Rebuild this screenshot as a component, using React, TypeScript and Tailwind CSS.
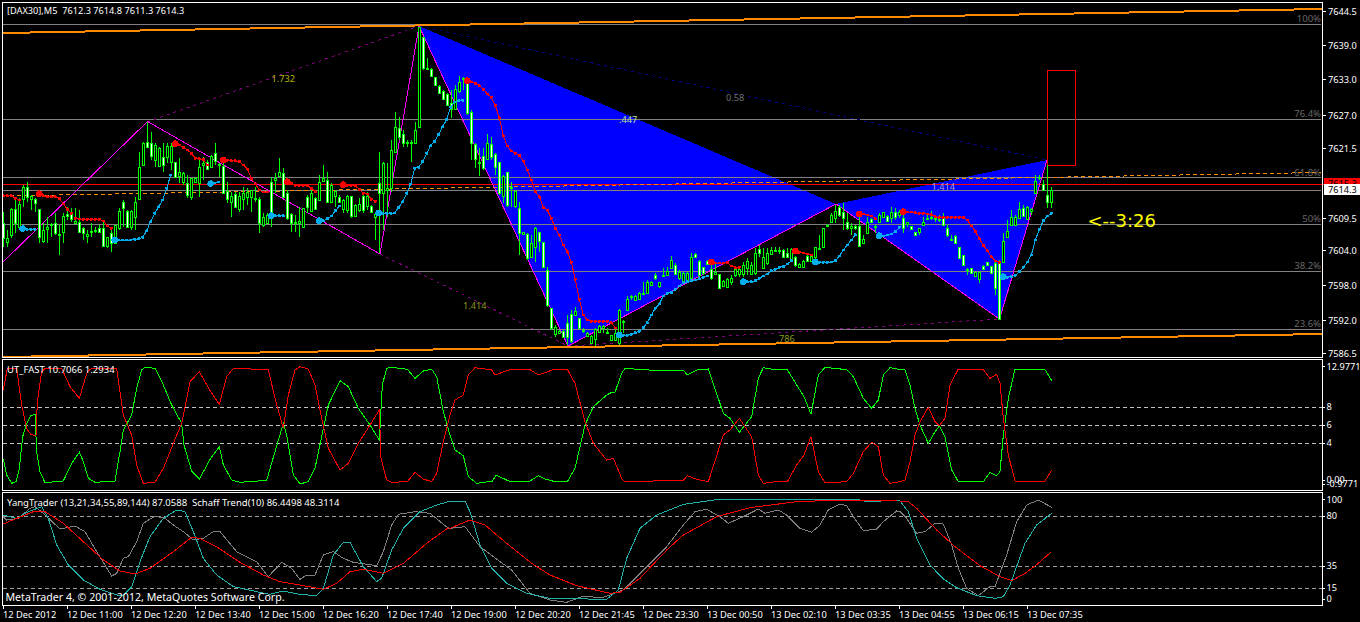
// MT4 chart: one flow column of panes, the chart drawings themselves are svg in page coordinates

type Candle = [number, number, number, number, number];

// high, low, body top, body bottom, white fill (all y in 3x px)
const candles: Candle[] = [
  [635,740,670,715,1],[690,740,715,725,0],[625,715,628,705,0],[590,700,627,668,1],[595,690,612,680,0],[555,620,562,598,0],[545,605,560,590,1],[585,630,588,596,0],[595,635,598,608,1],[628,730,628,712,1],
  [670,730,690,722,0],[650,730,682,686,0],[670,710,672,674,0],[640,705,668,700,1],[675,765,702,704,0],[640,730,648,695,0],[620,660,642,648,1],[625,665,642,658,1],[625,670,663,668,0],[630,700,665,695,1],
  [680,720,685,700,1],[690,730,702,708,0],[670,710,692,695,0],[680,700,690,692,0],[675,700,685,695,1],[660,740,685,738,1],[710,745,712,738,0],[690,755,700,730,1],[675,730,675,728,0],[625,690,633,685,0],
  [600,680,605,625,1],[630,685,634,680,1],[630,690,634,682,0],[590,690,605,650,0],[455,600,500,598,0],[425,497,430,495,0],[365,440,427,440,1],[395,480,430,467,1],[430,500,435,480,0],[440,500,445,498,0],
  [430,515,470,495,1],[430,490,438,470,0],[430,510,438,486,0],[485,535,486,530,1],[475,550,515,528,0],[515,555,518,545,0],[525,595,550,585,1],[535,600,535,590,0],[530,550,533,545,0],[475,590,500,548,0],
  [470,540,488,495,0],[480,510,485,508,1],[465,500,468,500,0],[430,495,458,482,1],[490,530,492,494,0],[490,575,498,578,1],[545,610,573,598,1],[575,650,588,605,0],[575,625,582,620,1],[575,635,588,628,0],
  [560,630,580,598,0],[565,615,575,590,0],[570,635,570,590,0],[560,605,595,598,0],[590,700,598,670,1],[640,680,650,675,0],[640,670,645,668,0],[530,680,545,645,1],[520,580,535,540,0],[475,530,515,527,0],
  [505,590,518,590,1],[570,660,578,655,1],[640,695,643,670,1],[645,695,665,668,0],[620,710,664,668,0],[625,685,625,680,0],[585,640,590,620,1],[570,635,580,632,0],[590,630,595,628,1],[525,600,545,600,0],
  [495,545,535,543,0],[515,610,540,607,1],[550,610,555,605,0],[570,620,572,588,0],[585,610,590,605,1],[598,640,600,628,0],[585,640,588,630,0],[587,655,588,648,1],[612,650,615,648,0],[595,635,612,630,0],
  [585,640,588,630,1],[575,630,588,618,0],[615,640,618,635,1],[640,720,643,650,0],[455,760,550,578,1],[485,690,488,580,0],[490,650,565,570,0],[420,575,450,565,0],[335,460,382,455,0],[350,420,385,410,1],
  [390,440,403,430,1],[420,440,425,428,0],[420,485,425,428,0],[365,430,390,428,0],[80,385,80,382,0],[110,210,112,205,1],[175,210,205,208,0],[205,230,208,228,1],[232,255,232,255,1],[255,280,258,278,1],
  [270,300,272,298,1],[280,315,282,315,1],[270,355,308,328,1],[255,330,268,328,0],[228,280,245,272,0],[230,270,235,238,0],[240,345,250,340,1],[330,480,335,430,1],[430,505,432,478,1],[445,528,485,488,0],
  [445,510,468,505,1],[403,480,428,478,0],[410,480,432,472,1],[460,525,462,500,1],[485,585,485,580,1],[525,610,527,588,0],[515,620,517,615,1],[545,620,560,565,0],[570,625,572,618,0],[605,765,625,700,1],
  [695,705,695,703,0],[700,780,702,775,1],[705,775,730,770,0],[680,785,683,740,0],[695,755,695,722,1],[727,800,727,800,1],[800,920,810,915,1],[925,990,925,985,1],[975,1010,980,1002,0],[990,1002,992,1000,0],
  [990,1015,992,1010,1],[945,1035,968,1010,1],[930,1030,942,1022,1],[920,945,932,945,0],[955,985,955,985,1],[985,1000,990,992,0],[995,1010,998,1008,0],[1005,1030,1007,1030,0],[985,1038,987,1018,0],[975,1000,978,995,0],
  [975,1000,978,985,0],[985,1000,995,998,0],[1005,1020,1005,1020,0],[980,1020,998,1020,0],[928,1035,930,1030,0],[960,1000,962,964,0],[888,930,898,930,0],[885,900,888,890,0],[885,900,888,900,0],[875,900,878,898,0],
  [845,880,878,880,0],[840,880,845,878,0],[842,858,845,856,0],[820,840,825,835,1],[845,865,845,858,0],[805,830,825,826,0],[800,825,812,824,0],[768,805,780,803,0],[790,825,795,822,1],[810,840,815,835,0],
  [815,850,818,845,0],[815,850,820,845,0],[760,835,770,835,0],[760,770,762,770,1],[780,830,782,825,1],[800,825,802,818,1],[780,795,782,792,1],[795,840,808,835,1],[790,825,815,822,0],[822,865,822,865,1],
  [840,860,843,858,0],[835,865,838,860,0],[825,855,835,845,0],[800,830,808,825,0],[800,830,808,822,0],[785,830,795,822,0],[775,825,782,805,0],[785,825,795,822,0],[745,825,760,820,0],[735,770,748,760,1],
  [745,805,770,805,0],[745,795,760,790,0],[740,765,750,762,0],[740,755,750,752,0],[740,762,750,752,0],[748,772,750,770,1],[745,775,760,770,1],[745,785,748,780,0],[768,800,770,795,1],[788,805,792,802,0],
  [780,805,782,802,0],[765,785,768,782,1],[765,785,768,782,0],[740,785,740,770,0],[705,750,745,747,0],[685,740,685,740,0],[672,678,675,677,0],[640,670,645,665,0],[615,670,632,655,0],[615,650,622,645,1],
  [610,690,635,655,1],[640,690,665,685,1],[670,705,678,685,0],[675,690,678,685,1],[640,740,678,738,1],[705,730,718,728,0],[650,700,665,698,0],[655,668,658,665,1],[675,700,677,678,0],[640,670,645,665,0],
  [635,655,635,650,0],[645,665,648,662,1],[622,670,635,655,0],[625,660,635,650,1],[630,655,635,645,0],[645,700,655,685,1],[665,680,665,672,0],[678,688,678,686,1],[695,708,697,706,1],[685,705,685,696,0],
  [650,678,665,675,0],[645,660,655,656,0],[632,660,650,652,0],[645,665,655,657,0],[645,665,658,660,0],[640,678,655,675,1],[675,710,685,706,1],[705,720,716,718,0],[705,728,708,728,1],[740,778,740,775,1],
  [765,796,765,796,1],[805,825,807,808,0],[803,818,805,818,1],[815,830,817,828,0],[815,848,817,838,0],[795,808,797,806,1],[785,798,785,796,1],[798,820,798,818,1],[785,885,788,865,1],[780,958,790,958,1],
  [700,785,722,785,0],[660,712,692,712,0],[630,675,650,675,0],[645,678,650,675,0],[605,655,628,655,0],[615,650,625,648,1],[618,660,620,658,0],[625,645,628,632,0],[525,578,542,578,0],[525,540,530,535,0],
  [540,570,552,570,1],[495,625,585,605,1],[562,625,570,607,0],
];

// trailing stop segments: x offset, colour, big first dot, flat 3x points
type Trail = [number, string, boolean, number[]];
const RED = "#ff0000";
const SKY = "#00aeef";
const trails: Trail[] = [
  [0,RED,false,[10,587,22,587,34,587,46,595,58,600]],
  [0,RED,true,[118,581,130,587,142,590,154,590,166,590,178,595,190,612,202,628,214,640]],
  [0,RED,false,[226,655,238,657,250,658,262,658,274,658,286,658,298,658,310,663,322,678,334,685]],
  [0,RED,true,[526,431,538,435,550,442,562,450,574,460,586,475,598,476,610,478,622,495]],
  [0,RED,true,[670,480,682,481,694,482,706,482,718,484,730,495,742,507,754,535,766,552,778,570,790,576,802,576]],
  [0,RED,true,[862,545,874,550,886,556,898,556,910,556,922,556,934,565,946,575]],
  [0,RED,true,[1030,554,1042,556,1054,556,1066,558,1078,568,1090,580,1102,582,1114,598,1126,604]],
  [440,RED,true,[82,242,94,246,106,250,118,257,130,268,142,282,154,292,166,316,178,353,190,408,202,438,214,453,226,460,238,466,250,483,262,510,274,540,286,575,298,590,310,622,322,630,334,655,346,685,358,705,370,735,382,755,394,787,406,838,418,898,430,945,442,960,454,964,466,964,478,964,490,964,502,964,514,968,526,984]],
  [440,RED,true,[814,786,826,789,838,789,850,789,862,787,874,798,886,803,898,802]],
  [440,RED,true,[1066,753,1078,757,1090,759,1102,762,1114,765]],
  [440,RED,true,[1258,642,1270,642,1282,645,1294,648,1306,656]],
  [900,RED,true,[10,635,22,636,34,636,46,638,58,640,70,640,82,642,94,644,106,650,118,652,130,652,142,652,154,652,166,652,178,652,190,652,202,660,214,678,226,694,238,716,250,736,262,752,274,770,286,783,298,787]],
  [0,SKY,true,[68,686,80,688,92,688,104,688]],
  [0,SKY,true,[344,720,356,720,368,720,380,720,392,720,404,718,416,716,428,712,440,692,452,665,464,640,476,620,488,600,500,565,512,525]],
  [0,SKY,true,[632,551,644,549,656,546]],
  [0,SKY,true,[814,647,826,647,838,647,850,647]],
  [0,SKY,true,[958,662,970,662,982,656,994,648,1006,632,1018,618]],
  [0,SKY,true,[1136,639,1148,640,1160,640,1172,640,1184,639,1196,622,1208,605,1220,580,1232,552,1244,505,1256,502,1268,484,1280,460,1292,437,1304,424,1316,403,1328,380,1340,358,1352,322,1364,306,1376,302,1388,301]],
  [440,SKY,true,[538,1005,550,1006,562,1006,574,1003,586,998,598,994,610,983,622,968,634,945,646,925,658,912,670,888,682,880,694,878,706,868,718,858,730,848,742,845,754,842,766,840,778,836,790,832,802,828]],
  [440,SKY,true,[910,845,922,845,934,845,946,842,958,835,970,828,982,822,994,812,1006,808,1018,802,1030,800,1042,792,1054,782]],
  [440,SKY,true,[1126,786,1138,787,1150,787,1162,787,1174,786,1186,782,1198,768,1210,750,1222,735,1234,720,1246,704]],
  [440,SKY,true,[1318,707,1330,708,1342,705,1354,702,1366,695,1378,682]],
  [900,SKY,true,[310,830,322,832,334,830,346,826,358,815,370,802,382,786,394,765,406,720,418,688,430,662,442,648,454,640]],
];

// indicator lines, three pieces that start at x 0, 450 and 900
const utGreen = [
  [10,312,20,360,35,385,48,380,58,340,68,245,80,205,92,182,105,178,110,290,120,350,135,383,190,378,215,325,238,292,250,320,265,370,285,382,345,378,360,290,370,225,395,180,410,100,425,45,435,37,465,40,490,90,515,150,545,205,552,270,575,348,598,372,632,310,658,275,670,330,695,375,720,382,800,376,825,290,850,205,860,240,880,360,900,387,925,380,945,340,965,245,985,150,1020,77,1045,95,1075,160,1110,210,1138,255,1147,90,1160,40,1175,37,1222,43,1245,70,1270,48,1295,43,1310,65,1330,170],
  [0,240,15,285,40,302,55,365,80,385,128,378,138,360,180,380,240,378,265,362,285,372,315,380,352,380,375,340,405,210,430,155,470,120,485,112,495,112,515,55,525,40,610,46,700,46,712,60,740,45,775,42,820,175,840,190,868,232,905,185,925,70,940,38,975,44,1012,44,1040,90,1062,125,1083,178,1105,60,1125,37,1190,44,1210,65,1240,130,1265,160,1285,135,1300,60,1320,38],
  [0,44,15,44,30,90,45,160,60,210,85,265,105,230,118,213,135,245,155,345,175,380,210,380,250,380,270,352,290,362,300,350,310,240,325,130,345,42,378,42,435,44,455,77],
];
const utRed = [
  [10,105,22,40,50,40,65,150,80,220,92,238,108,243,112,140,125,50,135,40,185,40,210,95,238,130,262,50,275,40,350,42,370,180,395,240,410,330,430,385,465,382,490,340,520,265,545,205,570,80,598,50,632,110,658,148,680,65,700,40,805,44,825,130,850,220,865,120,885,45,900,35,925,42,945,90,965,190,985,280,1020,345,1045,325,1075,265,1110,210,1138,165,1143,310,1160,375,1175,382,1222,380,1245,352,1270,372,1295,380,1310,355,1330,260],
  [0,180,15,135,40,120,55,60,75,38,125,45,135,60,180,44,240,44,265,60,310,44,352,43,375,85,405,200,430,265,470,315,490,310,515,370,525,381,610,378,700,376,712,362,740,373,775,380,820,240,840,225,868,190,905,245,925,360,940,385,975,380,1012,380,1040,330,1062,300,1083,245,1105,350,1125,384,1190,380,1210,355,1240,290,1265,262,1285,275,1300,360,1320,385],
  [0,380,15,375,30,320,45,240,60,200,85,157,105,200,118,212,135,190,150,90,175,42,210,42,250,44,270,70,290,58,300,85,310,190,325,300,345,378,378,380,435,378,455,345],
];
const ytGray = [
  [10,485,20,495,55,490,90,460,105,455,130,475,180,522,225,513,255,530,290,590,335,663,350,655,370,610,385,605,410,560,430,505,465,483,495,490,520,510,550,530,580,555,610,550,640,530,660,530,710,590,770,620,805,665,845,622,875,640,900,673,920,660,945,660,970,600,1000,590,1030,610,1060,622,1130,632,1150,590,1175,510,1195,478,1245,470,1290,475,1345,520],
  [0,520,45,515,90,575,150,620,185,645,240,715,300,735,350,742,395,725,460,727,520,705,590,635,650,575,700,510,735,470,770,463,810,485,835,505,880,485,925,462,945,475,985,465,1010,480,1050,520,1085,532,1110,510,1135,465,1170,447,1190,452,1210,485,1240,527,1280,522,1300,500,1340,468],
  [0,470,20,490,50,535,75,530,105,505,130,507,155,570,175,640,200,700,235,722,270,695,285,695,320,600,350,500,380,450,415,435,455,457],
];
const ytTeal = [
  [10,480,50,490,85,470,125,455,145,490,170,570,205,630,250,675,300,703,350,720,370,720,395,695,420,620,450,545,490,490,530,465,555,470,580,530,610,610,650,660,700,695,770,710,810,718,850,708,900,718,950,722,970,700,1000,600,1030,562,1050,562,1090,635,1130,680,1145,670,1175,585,1210,520,1260,470,1310,450,1345,440],
  [0,440,45,438,60,470,90,570,125,640,170,685,230,715,300,730,470,733,505,705,530,610,570,520,620,480,700,448,800,434,1050,434,1230,435,1250,440,1340,436],
  [0,438,25,470,50,550,90,630,130,672,170,698,230,722,285,730,310,725,330,690,375,565,410,510,455,475],
];
const ytRed = [
  [10,507,50,490,100,470,135,470,190,505,250,560,310,615,360,648,405,657,450,640,520,590,575,547,600,550,650,575,720,622,790,660,840,680,900,690,970,703,1010,685,1050,650,1090,643,1150,655,1210,625,1280,565,1345,518],
  [0,520,60,495,105,510,170,565,245,625,300,660,380,692,480,715,510,712,570,670,650,585,700,540,800,485,900,458,1040,440,1150,436,1340,438],
  [0,438,25,440,50,460,110,525,165,575,240,632,300,665,335,677,375,655,415,625,452,592],
];

const times = ["12 Dec 2012","12 Dec 11:00","12 Dec 12:20","12 Dec 13:40","12 Dec 15:00","12 Dec 16:20","12 Dec 17:40","12 Dec 19:00","12 Dec 20:20","12 Dec 21:45","12 Dec 23:30","13 Dec 00:50","13 Dec 02:10","13 Dec 03:35","13 Dec 04:55","13 Dec 06:15","13 Dec 07:35"];

const priceTicks: [string, number][] = [["7644.5",11],["7639.0",44.5],["7633.0",79],["7627.0",114.5],["7621.5",148],["7609.5",218],["7604.0",250],["7598.0",285],["7592.0",320],["7586.5",353]];
const levels = [24,119,177,190,224,271,329];
const fibs: [string, number][] = [["100%",18.7],["76.4%",113.5],["61.8%",172],["50%",218.5],["38.2%",265.5],["23.6%",323.5]];

function toPoints(flat: number[], ox: number, oy = 0) {
  const out: string[] = [];
  for (let i = 0; i < flat.length; i += 2) out.push(`${flat[i] / 3 + ox},${flat[i + 1] / 3 + oy}`);
  return out.join(" ");
}

function joined(parts: number[][]) {
  return [toPoints(parts[0], 0, 355), toPoints(parts[1], 450, 355), toPoints(parts[2], 900, 355)].join(" ");
}

function Txt({ x, y, fill = "#ffffff", size = "text-[9.2px]", anchor, children }: { x: number; y: number; fill?: string; size?: string; anchor?: "end"; children: React.ReactNode }) {
  return (
    <text x={x} y={y} fill={fill} className={size} textAnchor={anchor} dominantBaseline="central" xmlSpace="preserve">
      {children}
    </text>
  );
}

function PriceChart() {
  return (
    <svg viewBox="3 3 1319 354" className="block w-full h-full" shapeRendering="crispEdges">
      <polygon points="419,26 568,346 836,204" fill="#0000ff" />
      <polygon points="836,204 999.5,319 1047,160" fill="#0000ff" />
      {levels.map((y) => (
        <line key={y} x1={3} x2={1321} y1={y + 0.5} y2={y + 0.5} stroke="#808080" />
      ))}
      <line x1={3} x2={1322} y1={184.5} y2={184.5} stroke="#ff0000" />
      <line x1={3} x2={1322} y1={33} y2={9} stroke="#ff8c00" strokeWidth={2} />
      <line x1={3} x2={1322} y1={357} y2={334} stroke="#ff8c00" strokeWidth={2} />
      <line x1={3} x2={1321} y1={196} y2={172.5} stroke="#ff8c00" strokeDasharray="4 3" />
      <polyline points="147,122 419,26" fill="none" stroke="#800080" strokeDasharray="3 4" />
      <polyline points="380,254 568,346" fill="none" stroke="#800080" strokeDasharray="3 4" />
      <polyline points="568,346 999.5,319" fill="none" stroke="#800080" strokeDasharray="3 4" />
      <polyline points="419,26 1047,160" fill="none" stroke="#000080" strokeDasharray="3 4" />
      <polyline points="3,262 147.5,121.5 380,254 419,26 568,346 836,204 999.5,319 1047,160" fill="none" stroke="#ff00ff" />
      <rect x={1047.5} y={70.5} width={28} height={95} fill="none" stroke="#ff0000" />
      {candles.map((c, i) => {
        const x = 3 + 4 * i;
        const top = Math.round(c[2] / 3);
        const h = Math.max(Math.round(c[3] / 3) - top, 1);
        return (
          <g key={i}>
            <line x1={x + 0.5} x2={x + 0.5} y1={c[0] / 3} y2={c[1] / 3} stroke="#00ff00" />
            <rect x={x - 0.5} y={top + 0.5} width={2} height={h} fill={c[4] ? "#ffffff" : "#000000"} stroke="#00ff00" />
          </g>
        );
      })}
      {trails.map((t, i) => {
        const p = t[3];
        const dots = [];
        for (let k = 0; k < p.length; k += 2) {
          dots.push(<circle key={k} cx={p[k] / 3 + t[0]} cy={p[k + 1] / 3} r={t[2] && k === 0 ? 3.3 : 1.5} fill={t[1]} />);
        }
        return (
          <g key={i}>
            <polyline points={toPoints(p, t[0])} fill="none" stroke={t[1]} />
            {dots}
          </g>
        );
      })}
      <Txt x={7} y={10.5}>{"[DAX30],M5  7612.3 7614.8 7611.3 7614.3"}</Txt>
      <Txt x={271.5} y={78} fill="#b5b500">1.732</Txt>
      <Txt x={619} y={119.5} fill="#b9e08a">.447</Txt>
      <Txt x={726} y={97} fill="#707070">0.58</Txt>
      <Txt x={463} y={305.5} fill="#8a9a1e">1.414</Txt>
      <Txt x={776.5} y={338} fill="#8a9a1e">.786</Txt>
      <Txt x={931.5} y={186.5} fill="#a9a9c8">1.414</Txt>
      {fibs.map(([label, y]) => (
        <Txt key={label} x={1321} y={y} fill="#696969" anchor="end" size="text-[9.5px]">{label}</Txt>
      ))}
      <Txt x={1087.5} y={220} fill="#ffff00" size="text-[18px] [font-family:'DejaVu_Sans',sans-serif]">{"<--3:26"}</Txt>
    </svg>
  );
}

function UtFast() {
  return (
    <svg viewBox="3 360 1319 130" className="block w-full h-full" shapeRendering="crispEdges">
      {[407.5, 425.5, 443.5].map((y) => (
        <line key={y} x1={3} x2={1322} y1={y} y2={y} stroke="#c0c0c0" strokeDasharray="4 3" />
      ))}
      <polyline points={joined(utGreen)} fill="none" stroke="#00ff00" />
      <polyline points={joined(utRed)} fill="none" stroke="#ff0000" />
      <Txt x={7} y={369} size="text-[9.5px]">UT_FAST 10.7066 1.2934</Txt>
    </svg>
  );
}

function YangTrader() {
  return (
    <svg viewBox="3 493 1319 112" className="block w-full h-full" shapeRendering="crispEdges">
      {[516.5, 566.5, 588.5].map((y) => (
        <line key={y} x1={3} x2={1322} y1={y} y2={y} stroke="#a0a0a0" strokeDasharray="4 3" />
      ))}
      <polyline points={joined(ytGray)} fill="none" stroke="#808080" />
      <polyline points={joined(ytTeal)} fill="none" stroke="#20b2aa" />
      <polyline points={joined(ytRed)} fill="none" stroke="#ff0000" />
      <Txt x={7} y={502} size="text-[9.5px]">{"YangTrader (13,21,34,55,89,144) 87.0588  Schaff Trend(10) 86.4498 48.3114"}</Txt>
      <Txt x={5.5} y={597} size="text-[10.6px]">MetaTrader 4, © 2001-2012, MetaQuotes Software Corp.</Txt>
    </svg>
  );
}

function PriceAxis() {
  return (
    <svg viewBox="1323 2 37 356" className="block w-[37px] h-full" shapeRendering="crispEdges">
      {priceTicks.map(([label, y]) => (
        <g key={label}>
          <line x1={1323} x2={1326} y1={y + 0.5} y2={y + 0.5} stroke="#ffffff" />
          <Txt x={1328} y={y + 0.5}>{label}</Txt>
        </g>
      ))}
      <rect x={1324} y={178} width={36} height={6} fill="#ff0000" />
      <Txt x={1328} y={183} fill="#000000">7615.3</Txt>
      <line x1={1323} x2={1324} y1={184.5} y2={184.5} stroke="#ff0000" />
      <rect x={1324} y={184} width={36} height={11} fill="#ffffff" />
      <Txt x={1328} y={189.5} fill="#000000">7614.3</Txt>
    </svg>
  );
}

function ScaleAxis({ view, ticks }: { view: string; ticks: [string, number, number][] }) {
  return (
    <svg viewBox={view} className="block w-[37px] h-full" shapeRendering="crispEdges">
      {ticks.map(([label, y, tick]) => (
        <g key={label}>
          <line x1={1323} x2={1325} y1={tick + 0.5} y2={tick + 0.5} stroke="#ffffff" />
          <Txt x={1326.5} y={y}>{label}</Txt>
        </g>
      ))}
    </svg>
  );
}

export default function App() {
  return (
    <div className="w-[1360px] h-[622px] overflow-hidden bg-black pt-[2px] pl-[2px] flex flex-col gap-px [font-family:'Noto_Sans',sans-serif] text-white">
      <div className="flex h-[356px]">
        <div className="w-[1321px] border border-white"><PriceChart /></div>
        <PriceAxis />
      </div>
      <div className="flex h-[132px]">
        <div className="w-[1321px] border border-white"><UtFast /></div>
        <ScaleAxis
          view="1323 359 37 132"
          ticks={[["12.9771",366.5,366],["8",406.5,407],["6",424.5,425],["4",442,443],["0.00",479,480],["-0.9771",483.5,484]]}
        />
      </div>
      <div className="flex h-[114px]">
        <div className="w-[1321px] border border-white"><YangTrader /></div>
        <ScaleAxis
          view="1323 492 37 114"
          ticks={[["100",499,499],["80",515.5,516],["35",565.5,566],["15",587.5,588],["0",598.5,599]]}
        />
      </div>
      <div className="flex pl-px -mt-px">
        {times.map((t) => (
          <div key={t} className="w-16 shrink-0">
            <div className="h-[3px] border-l border-white" />
            <div className="mt-px text-[9.3px] leading-[10px] whitespace-nowrap">{t}</div>
          </div>
        ))}
      </div>
    </div>
  );
}
